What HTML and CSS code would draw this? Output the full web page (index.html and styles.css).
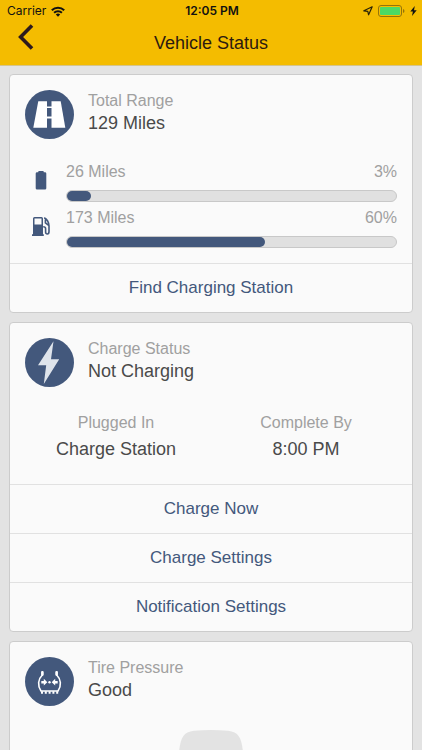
FILE: index.html
```html
<!DOCTYPE html>
<html lang="en">
<head>
<meta charset="utf-8">
<meta name="viewport" content="width=device-width, initial-scale=1">
<title>Vehicle Status</title>
<link rel="stylesheet" href="styles.css">
</head>
<body>
<header class="top">
  <div class="status">
    <div class="status-left">
      <span>Carrier</span>
      <svg width="14" height="11" viewBox="0 0 14 11" fill="none" stroke="#111" stroke-width="2" aria-hidden="true">
        <path d="M.8 4.2a8.8 8.8 0 0 1 12.4 0M3.1 6.8a5.5 5.5 0 0 1 7.8 0"/>
        <path d="M7 10.8 4.8 8.6a3.1 3.1 0 0 1 4.4 0z" fill="#111" stroke="none"/>
      </svg>
    </div>
    <span class="clock">12:05 PM</span>
    <div class="status-right">
      <svg class="location" width="10" height="10" viewBox="0 0 10 10" fill="none" stroke="#2b2306" stroke-width="1.2" stroke-linejoin="round" aria-hidden="true"><path d="M9.2.8 5.6 8.8 4.8 5.4.8 4.8z"/></svg>
      <svg width="27" height="12" viewBox="0 0 27 12" aria-hidden="true">
        <rect x=".5" y=".5" width="23" height="11" rx="2.5" fill="none" stroke="#94740a"/>
        <rect x="2" y="2" width="20" height="8" rx="1" fill="#4cd964"/>
        <path d="M25 4v4q1.500-.6 1.500-2T25 4z" fill="#94740a"/>
      </svg>
      <svg width="7" height="10" viewBox="0 0 7 10" aria-hidden="true"><path d="M4.800 0 .3 5.600h2.600L2 10l4.700-5.800H4z" fill="#111"/></svg>
    </div>
  </div>
  <nav class="nav">
    <button class="back" type="button" aria-label="Back">
      <svg width="16" height="26" viewBox="0 0 16 26" fill="none" stroke="#2c1a1d" stroke-width="3.6" aria-hidden="true"><path d="M14 1.4 2.6 13 14 24.6"/></svg>
    </button>
    <h1>Vehicle Status</h1>
  </nav>
</header>

<main class="cards">
  <section class="card">
    <div class="summary">
      <svg class="badge" viewBox="0 0 49 49" aria-hidden="true">
        <circle cx="24.5" cy="24.5" r="24.5" fill="#43587c"/>
        <path d="M13.3 11.3h22.4l4.6 26.4H8.3z" fill="#fff"/>
        <path d="M22 11h4.5v5.500H22zM22 18h4.500v8.500H22zM22 28.500h4.500V38H22z" fill="#43587c"/>
      </svg>
      <div>
        <h2 class="label">Total Range</h2>
        <p class="value">129 Miles</p>
      </div>
    </div>
    <div class="ranges">
      <div class="range">
        <svg class="range-icon" width="12" height="19" viewBox="0 0 12 19" fill="#43587c" aria-hidden="true"><path d="M4 0h4q.8 0 .8 1.300H10q1.300 0 1.300 1.300v14.600q0 1.300-1.300 1.300H2Q.7 18.500.7 17.200V2.600q0-1.300 1.300-1.300h1.200Q3.200 0 4 0z"/></svg>
        <div class="range-body">
          <div class="range-text"><span>26 Miles</span><span>3%</span></div>
          <div class="track"><div class="fill" style="width:7.4%"></div></div>
        </div>
      </div>
      <div class="range">
        <svg class="range-icon" width="18" height="20" viewBox="0 0 18 20" aria-hidden="true">
          <path fill="#43587c" fill-rule="evenodd" d="M2.500 0h7Q11 0 11 1.500v15.700h.8V19H0v-1.800h1V1.500Q1 0 2.500 0zM2.500 1.600v6h7v-6z"/>
          <path d="M12.200.7c3 1.500 4.600 4.300 4.800 8.300v5.500c0 3.300-3.400 3.300-3.400.5v-3.500c0-1.300-.9-1.800-2.400-1.800M13.400 2.600v3.200l3.300 2.600" fill="none" stroke="#43587c" stroke-width="1.600"/>
        </svg>
        <div class="range-body">
          <div class="range-text"><span>173 Miles</span><span>60%</span></div>
          <div class="track"><div class="fill" style="width:60.2%"></div></div>
        </div>
      </div>
    </div>
    <button class="action" type="button">Find Charging Station</button>
  </section>

  <section class="card">
    <div class="summary">
      <svg class="badge" viewBox="0 0 49 49" aria-hidden="true">
        <circle cx="24.5" cy="24.5" r="24.5" fill="#43587c"/>
        <path d="M28.500 3.300 13 27.200h8.200L18.800 46 34.200 21.300H26z" fill="#dfe4eb"/>
      </svg>
      <div>
        <h2 class="label">Charge Status</h2>
        <p class="value">Not Charging</p>
      </div>
    </div>
    <dl class="details">
      <div><dt>Plugged In</dt><dd>Charge Station</dd></div>
      <div><dt>Complete By</dt><dd>8:00 PM</dd></div>
    </dl>
    <button class="action" type="button">Charge Now</button>
    <button class="action" type="button">Charge Settings</button>
    <button class="action" type="button">Notification Settings</button>
  </section>

  <section class="card">
    <div class="summary">
      <svg class="badge" viewBox="0 0 49 49" aria-hidden="true">
        <circle cx="24.5" cy="24.5" r="24.5" fill="#43587c"/>
        <g fill="none" stroke="#fff" stroke-linejoin="round">
          <path d="M17.300 14.500V18c-4.300 4.200-5 10.500-1.300 16h17c3.700-5.500 3-11.800-1.300-16v-3.500" stroke-width="1.600"/>
          <path d="M17.400 15.200v2.400M31.600 15.200v2.400" stroke-width="2.600" stroke-linecap="round"/>
          <path d="M16 35.500h17.200" stroke-width="2.600" stroke-dasharray="2 1.800"/>
        </g>
        <path d="M16.300 24h2.500v-2.200l3.500 3.400-3.500 3.400v-2.200h-2.500zM32.700 24h-2.500v-2.200l-3.500 3.400 3.500 3.400v-2.200h2.500z" fill="#fff"/>
        <circle cx="24.500" cy="25.200" r="1.200" fill="#fff"/>
      </svg>
      <div>
        <h2 class="label">Tire Pressure</h2>
        <p class="value">Good</p>
      </div>
    </div>
    <svg class="car" width="64" height="120" viewBox="0 0 64 120" aria-hidden="true"><path d="M0 120V22C1.500 8 4 2 15 .7Q32-.7 49 .7C60 2 62.500 8 64 22v98z" fill="#e3e3e3"/></svg>
  </section>
</main>
</body>
</html>
```
FILE: styles.css
```css
* {
  box-sizing: border-box;
}

html {
  height: 100%;
  overflow: hidden;
}

body {
  height: 100%;
  margin: 0;
  display: flex;
  flex-direction: column;
  background: #e3e3e3;
  color: #4a4a4a;
  font: 18px/22px "Liberation Sans", Arial, sans-serif;
}

h1, h2, p, dl, dd {
  margin: 0;
}

button {
  border: 0;
  padding: 0;
  background: none;
  font: inherit;
  cursor: pointer;
}

svg {
  display: block;
}

.top {
  flex: none;
  background: #f4bc00;
  border-bottom: 1px solid #d5c48c;
}

.status {
  display: grid;
  grid-template-columns: 1fr auto 1fr;
  align-items: center;
  height: 22px;
  padding: 0 5px 0 7px;
  color: #111;
  font-family: Inter, sans-serif;
  font-size: 12px;
}

.status-left,
.status-right {
  display: flex;
  align-items: center;
  gap: 5px;
}

.status-right {
  justify-content: flex-end;
}

.clock {
  font-weight: 600;
}

.nav {
  display: grid;
  grid-template-columns: 48px 1fr 48px;
  height: 43px;
}

.back {
  align-self: start;
  justify-self: center;
  padding: 2px 0 10px 4px;
}

.nav h1 {
  color: #2c1a10;
  font-size: 18px;
  font-weight: 400;
  line-height: 43px;
  text-align: center;
}

.cards {
  flex: 1;
  min-height: 0;
  overflow: hidden;
  display: flex;
  flex-direction: column;
  gap: 9px;
  padding: 8px 9px;
}

.card {
  flex: none;
  background: #fafafa;
  border: 1px solid #ccc;
  border-radius: 4px;
}

.summary {
  display: flex;
  gap: 14px;
  padding: 15px 15px 0;
}

.badge {
  width: 49px;
  height: 49px;
}

.label,
.details dt,
.range-text {
  color: #a0a0a0;
  font-size: 16px;
  font-weight: 400;
}

.ranges {
  padding: 20px 15px 15px;
  display: grid;
  gap: 3px;
}

.range {
  display: grid;
  grid-template-columns: 32px 1fr;
  gap: 9px;
  align-items: center;
}

.range-icon {
  justify-self: center;
}

.range-text {
  display: flex;
  justify-content: space-between;
  margin-bottom: 5px;
  line-height: 26px;
}

.track {
  height: 12px;
  background: #e0e0e0;
  border: 1px solid #c8c8c8;
  border-radius: 6px;
}

.fill {
  height: 10px;
  background: #43587c;
  border-radius: 5px;
}

.details {
  display: grid;
  grid-template-columns: 1fr 1fr;
  padding: 23px 11px 22px;
  text-align: center;
  line-height: 26px;
}

.action {
  display: block;
  width: 100%;
  height: 49px;
  border-top: 1px solid #e1e1e1;
  color: #43587c;
  font-size: 17px;
}

.car {
  margin: 24px auto 0;
}
```
